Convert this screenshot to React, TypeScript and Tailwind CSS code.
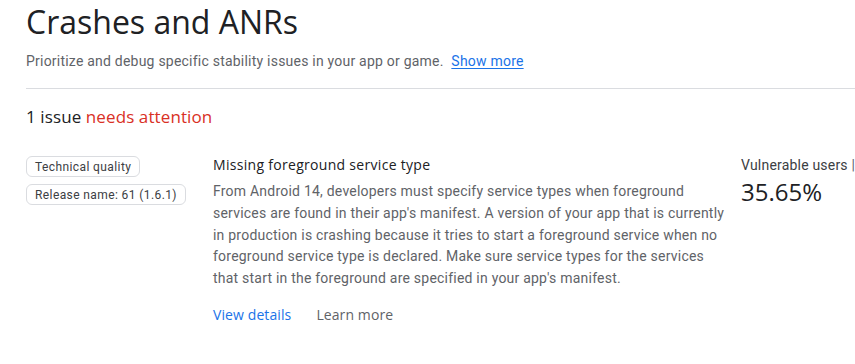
import React from "react";

const sans = "font-['Open_Sans',sans-serif]";
const roboto = "font-['Roboto',sans-serif]";

const Chip: React.FC<{ label: string }> = ({ label }) => (
  <span
    className={`inline-flex h-[21px] items-center rounded-[6px] border border-[#dadce0] px-[8px] text-[12px] tracking-[0.4px] text-[#3c4043] ${roboto}`}
  >
    {label}
  </span>
);

export default function App() {
  return (
    <div className="h-[364px] w-[855px] overflow-hidden bg-white pl-[26px]">
      <h1 className={`pt-[2px] text-[32px] leading-[40px] text-[#202124] ${sans}`}>Crashes and ANRs</h1>
      <p className={`mt-[9px] text-[14px] leading-[20px] tracking-[0.22px] text-[#5f6368] ${roboto}`}>
        Prioritize and debug specific stability issues in your app or game.{" "}
        <a className="ml-[4px] text-[#1a73e8] underline underline-offset-2" href="#">
          Show more
        </a>
      </p>
      <div className="mt-[17px] border-t border-[#dadce0]" />
      <div className={`mt-[16px] text-[17px] leading-[24px] tracking-[0.1px] text-[#202124] ${sans}`}>
        1 issue <span className="text-[#d93025]">needs attention</span>
      </div>

      <div className="mt-[26px] flex">
        <div className="flex w-[187px] shrink-0 flex-col items-start gap-[7px] pt-[1px]">
          <Chip label="Technical quality" />
          <Chip label="Release name: 61 (1.6.1)" />
        </div>

        <div className="w-[515px] shrink-0">
          <div className={`text-[14px] font-medium leading-[20px] tracking-[0.3px] text-[#202124] ${sans}`}>
            Missing foreground service type
          </div>
          <p className={`mt-[6px] text-[14px] leading-[21.75px] tracking-[0.22px] text-[#5f6368] ${roboto}`}>
            From Android 14, developers must specify service types when foreground services are found in their
            app's manifest. A version of your app that is currently in production is crashing because it tries to
            start a foreground service when no foreground service type is declared. Make sure service types for the
            services that start in the foreground are specified in your app's manifest.
          </p>
          <div className={`mt-[14px] flex gap-[25px] text-[14px] font-medium tracking-[0.1px] ${sans}`}>
            <a href="#" className="text-[#1a73e8]">
              View details
            </a>
            <a href="#" className="text-[#5f6368]">
              Learn more
            </a>
          </div>
        </div>

        <div className="ml-[13px] shrink-0 whitespace-nowrap">
          <div className={`text-[14px] leading-[20px] tracking-[0.2px] text-[#3c4043] ${roboto}`}>
            Vulnerable users <span className="text-[#5f6368]">|</span>
          </div>
          <div className={`mt-[2px] text-[24px] leading-[30px] text-[#202124] ${sans}`}>35.65%</div>
        </div>
      </div>
    </div>
  );
}
